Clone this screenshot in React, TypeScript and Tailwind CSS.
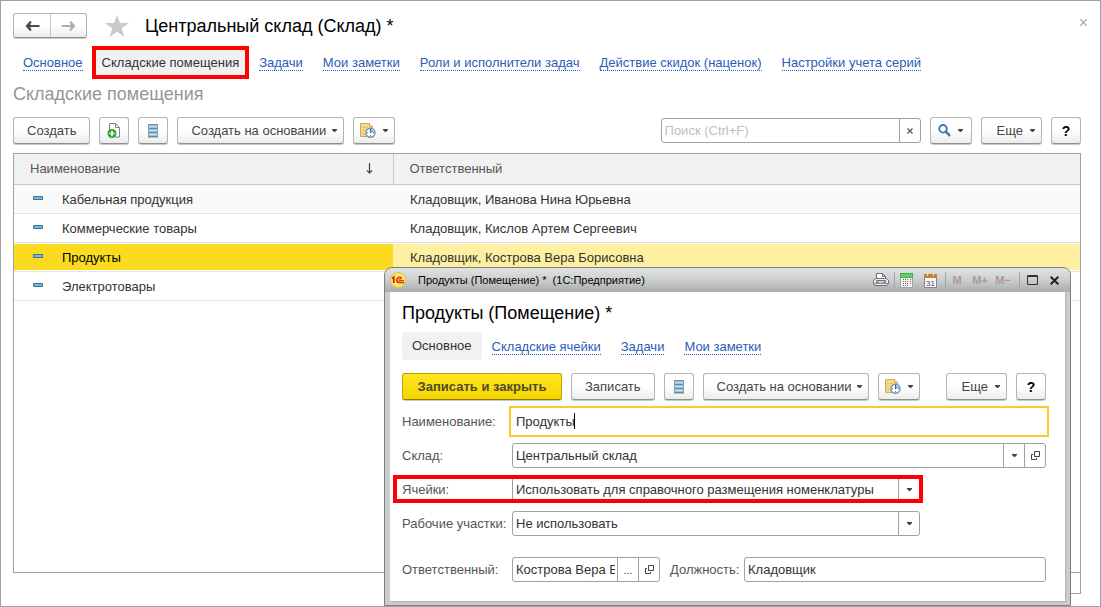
import type { ReactNode } from "react";

const rows = [
  { name: "Кабельная продукция", owner: "Кладовщик, Иванова Нина Юрьевна" },
  { name: "Коммерческие товары", owner: "Кладовщик, Кислов Артем Сергеевич" },
  { name: "Продукты", owner: "Кладовщик, Кострова Вера Борисовна", selected: true },
  { name: "Электротовары", owner: "" },
];

const links = [
  "Задачи",
  "Мои заметки",
  "Роли и исполнители задач",
  "Действие скидок (наценок)",
  "Настройки учета серий",
];

export default function App() {
  return (
    <div
      className="relative flex min-h-screen flex-col overflow-hidden border border-[#a0a0a0] bg-white pr-[19px] pl-3 text-[13px] leading-4 text-[#404040]"
      style={{ fontFamily: '"Liberation Sans", Arial, sans-serif' }}
    >
      <header className="flex h-[45px] items-center pt-1">
        <div className="flex h-[25px] rounded-[3px] border border-[#b4b4b4] border-b-[#8f8f8f] bg-gradient-to-b from-white via-white to-[#ececec] shadow-[0_1px_0_#c8c8c8]">
          <button aria-label="Назад" className="flex w-[37px] items-center justify-center border-r border-[#c8c8c8] text-[#4a4a4a]">
            <ArrowIcon />
          </button>
          <button aria-label="Вперед" className="flex w-[35px] items-center justify-center text-[#b0b0b0]">
            <ArrowIcon flip />
          </button>
        </div>
        <StarIcon />
        <h1 className="ml-4 text-[18px] leading-6 text-black">Центральный склад (Склад) *</h1>
        <button aria-label="Закрыть" className="mb-[6px] ml-auto -mr-[10px] p-1 text-[#a0a0a0]">
          <CrossIcon />
        </button>
      </header>

      <nav className="flex h-[33px] items-center">
        <TabLink>Основное</TabLink>
        <button className="-ml-px h-full border-4 border-[#fe0000] bg-[#f1f1f1] px-[6px] text-[#333]">
          Складские помещения
        </button>
        {links.map((l) => (
          <TabLink key={l}>{l}</TabLink>
        ))}
      </nav>

      <h2 className="mt-[3px] text-[18px] leading-6 text-[#969696]">Складские помещения</h2>

      <div className="mt-[11px] flex items-start gap-[9px]">
        <Button>Создать</Button>
        <Button small label="Создать копированием"><DocPlusIcon /></Button>
        <Button small label="Список"><ListIcon /></Button>
        <Button menu>Создать на основании</Button>
        <Button small menu label="Напоминания"><DocClockIcon /></Button>
        <div className="ml-auto flex h-[25px] w-[260px] overflow-hidden rounded-[3px] border border-[#a0a0a0] mt-px">
          <input
            type="text"
            aria-label="Поиск"
            placeholder="Поиск (Ctrl+F)"
            className="min-w-0 flex-1 px-[3px] outline-none placeholder:text-[#c0c0c0]"
          />
          <button aria-label="Очистить" className="flex w-[21px] items-center justify-center border-l border-[#a0a0a0] text-[#555]">
            <svg width="6" height="6" viewBox="0 0 6 6" stroke="currentColor" strokeWidth="1.3">
              <path d="M.5.5l5 5M5.5.5l-5 5" />
            </svg>
          </button>
        </div>
        <Button small menu label="Найти"><SearchIcon /></Button>
        <Button menu><MoreLabel /></Button>
        <Button small label="Справка"><span className="text-[14px] font-bold text-black">?</span></Button>
      </div>

      <div className="mt-[9px] h-[420px] border border-[#a0a0a0]">
        <table className="w-full table-fixed border-collapse text-left">
          <thead>
            <tr className="h-[30px] border-b border-[#c8c8c8] bg-[#f1f1f1] text-[#555]">
              <th className="w-[379px] border-r border-[#c8c8c8] pr-5 pl-4 font-normal">
                <div className="flex items-center justify-between">
                  Наименование
                  <svg width="8" height="12" viewBox="0 0 8 12" fill="none" stroke="#444">
                    <path d="M4.500 0v10M2 7.500L4.500 10 7 7.500" strokeWidth="1.200" />
                  </svg>
                </div>
              </th>
              <th className="pl-4 font-normal">Ответственный</th>
            </tr>
          </thead>
          <tbody>
            {rows.map((row, i) => (
              <tr
                key={row.name}
                className={`h-[29px] border-b border-[#e4e4e4] ${i === 0 ? "bg-[#fafafa]" : ""}`}
              >
                <td className="p-0">
                  <div className={`flex h-[26px] items-center gap-[19px] pt-[2px] pl-[19px] ${row.selected ? "bg-[#fbdb1f] text-black" : "text-[#333]"}`}>
                    <DashIcon />
                    {row.name}
                  </div>
                </td>
                <td className="p-0">
                  <div className={`flex h-[26px] items-center pt-[2px] pl-[17px] text-[#333] ${row.selected ? "bg-[#fdf0a0]" : ""}`}>
                    {row.owner}
                  </div>
                </td>
              </tr>
            ))}
          </tbody>
        </table>
      </div>
      <div className="-mt-px h-[22px] w-[120px] self-end border border-[#a0a0a0]" />

      <ItemDialog />
    </div>
  );
}

function ItemDialog() {
  return (
    <section
      aria-label="Продукты (Помещение)"
      className="absolute top-[266px] right-[29px] w-[687px] rounded-t-[8px] border border-[#7d7f81] bg-[#cbcccd] px-[5px] pb-[4px]"
    >
      <div className="-mx-[5px] flex h-[24px] items-center rounded-t-[7px] bg-gradient-to-b from-[#e2e3e3] via-[#cccdce] to-[#a9abad] pr-[11px] pl-[5px] text-black">
        <LogoIcon />
        <span className="ml-3 text-[11px] whitespace-pre">Продукты (Помещение) *  (1С:Предприятие)</span>
        <div className="ml-auto flex h-full items-center">
          <button aria-label="Печать"><PrinterIcon /></button>
          <i className="mx-[5px] h-4 w-px bg-[#a4a5a6]" />
          <button aria-label="Калькулятор"><CalculatorIcon /></button>
          <button aria-label="Календарь" className="ml-[11px]"><CalendarIcon /></button>
          <i className="ml-2 h-4 w-px bg-[#a4a5a6]" />
          <button className="w-[22px] text-[11px] font-bold text-[#ad9a94]">M</button>
          <button className="w-6 text-[11px] font-bold text-[#ad9a94]">M+</button>
          <button className="w-[22px] text-[11px] font-bold text-[#ad9a94]">M−</button>
          <i className="ml-[5px] h-4 w-px bg-[#a4a5a6]" />
          <button aria-label="Развернуть" className="ml-[7px]">
            <svg width="11" height="10" viewBox="0 0 11 10" fill="none" stroke="#333" className="block">
              <path d="M.5.5h10v9H.5zM.5 1.500h10" />
            </svg>
          </button>
          <button aria-label="Закрыть окно" className="ml-3">
            <svg width="9" height="9" viewBox="0 0 9 9" stroke="#222" strokeWidth="2" className="block">
              <path d="M.7.7l7.600 7.600M8.300.7L.7 8.300" />
            </svg>
          </button>
        </div>
      </div>

      <div className="bg-white pt-[9px] pr-[19px] pb-[19px] pl-3 shadow-[1px_1px_1px_#b4b4b4]">
        <h2 className="text-[18px] leading-6 text-black">Продукты (Помещение) *</h2>

        <nav className="mt-[7px] flex h-7 items-center">
          <button className="h-full rounded-[4px] bg-[#f1f1f1] px-[10px] text-[#333]">Основное</button>
          <TabLink>Складские ячейки</TabLink>
          <TabLink>Задачи</TabLink>
          <TabLink>Мои заметки</TabLink>
        </nav>

        <div className="mt-[13px] flex gap-[9px]">
          <button className="h-[27px] w-[160px] rounded-[3px] border border-[#bfa200] border-b-[#8f7a00] bg-gradient-to-b from-[#ffe61c] to-[#f5d500] font-bold text-[#4f4a2a] shadow-[0_1px_0_#c8c8c8]">
            Записать и закрыть
          </button>
          <Button>Записать</Button>
          <Button small label="Список"><ListIcon /></Button>
          <Button menu>Создать на основании</Button>
          <Button small menu label="Напоминания"><DocClockIcon /></Button>
          <div className="ml-auto flex gap-[9px]">
            <Button menu><MoreLabel /></Button>
            <Button small label="Справка"><span className="text-[14px] font-bold text-black">?</span></Button>
          </div>
        </div>

        <div className="mt-[9px] flex flex-col gap-[9px] text-[#555]">
          <Row label="Наименование:" id="name">
            <div className="relative flex flex-1">
              <input
                id="name"
                defaultValue="Продукты"
                className="h-[25px] min-w-0 flex-1 px-1 text-[#333] outline-2 outline-offset-1 outline-[#fbcc1f]"
              />
              <i className="absolute top-1 left-[62px] h-4 w-px bg-black" />
            </div>
          </Row>
          <Row label="Склад:" id="store">
            <Field>
              <input id="store" defaultValue="Центральный склад" className="min-w-0 flex-1 pl-[3px] outline-none" />
              <FieldButton label="Выбрать"><Caret /></FieldButton>
              <FieldButton label="Открыть"><OpenIcon /></FieldButton>
            </Field>
          </Row>
          <div className="relative">
            <Row label="Ячейки:" id="cells">
              <SelectField id="cells" value="Использовать для справочного размещения номенклатуры" />
            </Row>
            <div className="pointer-events-none absolute -top-[2px] -left-[9px] h-[28px] w-[530px] border-4 border-[#fe0000]" />
          </div>
          <Row label="Рабочие участки:" id="areas">
            <SelectField id="areas" value="Не использовать" />
          </Row>
          <div className="mt-3 flex">
            <Row label="Ответственный:" id="owner">
              <div className="flex w-[148px]">
                <Field>
                  <input id="owner" defaultValue="Кострова Вера Борисовна" className="mr-[2px] min-w-0 flex-1 pl-[3px] outline-none" />
                  <FieldButton label="Подобрать"><span className="text-[11px]">...</span></FieldButton>
                  <FieldButton label="Открыть"><OpenIcon /></FieldButton>
                </Field>
              </div>
            </Row>
            <label htmlFor="post" className="ml-[10px] w-[74px] self-center">Должность:</label>
            <Field>
              <input id="post" defaultValue="Кладовщик" className="min-w-0 flex-1 pl-[3px] outline-none" />
            </Field>
          </div>
        </div>
      </div>
    </section>
  );
}

function TabLink({ children }: { children: ReactNode }) {
  return (
    <a href="#" className="mx-[10px] pt-[2px] text-[#2a5db8]">
      <span className="block border-b border-dotted border-[#2a5db8] leading-[14px]">{children}</span>
    </a>
  );
}

function MoreLabel() {
  return <span className="pr-px pl-[2px]">Еще</span>;
}

function Button({
  children,
  small,
  menu,
  label,
}: {
  children: ReactNode;
  small?: boolean;
  menu?: boolean;
  label?: string;
}) {
  return (
    <button
      aria-label={label}
      className={`flex h-[27px] shrink-0 items-center justify-center rounded-[3px] border border-[#b4b4b4] border-b-[#8f8f8f] bg-gradient-to-b from-white via-white to-[#ececec] text-[#444] shadow-[0_1px_0_#c8c8c8] ${
        small ? (menu ? "w-[42px] gap-[7px]" : "w-[30px]") : menu ? "gap-[6px] pr-[6px] pl-[13px]" : "px-[13px]"
      }`}
    >
      {children}
      {menu && <Caret />}
    </button>
  );
}

function Row({ label, id, children }: { label: string; id: string; children: ReactNode }) {
  return (
    <div className="flex items-center">
      <label htmlFor={id} className="w-[110px] shrink-0 whitespace-nowrap">{label}</label>
      {children}
    </div>
  );
}

function Field({ children }: { children: ReactNode }) {
  return (
    <div className="flex h-[25px] min-w-0 flex-1 overflow-hidden rounded-[3px] border border-[#a0a0a0] text-[#333]">
      {children}
    </div>
  );
}

function FieldButton({ label, children }: { label: string; children: ReactNode }) {
  return (
    <button aria-label={label} className="flex w-[21px] shrink-0 items-center justify-center border-l border-[#a0a0a0] text-[#444]">
      {children}
    </button>
  );
}

function SelectField({ id, value }: { id: string; value: string }) {
  return (
    <div className="relative flex w-[408px]">
      <select id={id} className="h-[25px] w-full appearance-none rounded-[3px] border border-[#a0a0a0] bg-white pl-[3px] text-[#333]">
        <option>{value}</option>
      </select>
      <span className="pointer-events-none absolute inset-y-px right-px flex w-[21px] items-center justify-center border-l border-[#a0a0a0] text-[#444]">
        <Caret />
      </span>
    </div>
  );
}

/* icons */

function Caret() {
  return (
    <svg width="5" height="3" viewBox="0 0 5 3" fill="#444" className="shrink-0">
      <path d="M0 0h5v1L3 3H2L0 1z" />
    </svg>
  );
}

function ArrowIcon({ flip }: { flip?: boolean }) {
  return (
    <svg width="15" height="12" viewBox="0 0 15 12" fill="none" stroke="currentColor" className={flip ? "-scale-x-100" : ""}>
      <path d="M14.500 6H2" strokeWidth="2" />
      <path d="M6 1.500L1.800 6 6 10.500" strokeWidth="2" />
      <path d="M5.500 3v6L2 6z" fill="currentColor" stroke="none" />
    </svg>
  );
}

function StarIcon() {
  return (
    <svg width="24" height="22" viewBox="0 0 24 22" fill="#c8cacb" className="ml-[18px]">
      <path d="M12 0l2.900 8H24l-7.300 5.200L19.400 22 12 16.700 4.600 22l2.700-8.800L0 8h9.100z" />
    </svg>
  );
}

function CrossIcon() {
  return (
    <svg width="7" height="7" viewBox="0 0 7 7" stroke="currentColor" strokeWidth="1.200" className="block">
      <path d="M.3.3l6.400 6.400M6.700.3L.3 6.700" />
    </svg>
  );
}

function DashIcon() {
  return (
    <svg width="10" height="4" viewBox="0 0 10 4" className="mb-[3px] shrink-0">
      <path d="M.5.5h9v3h-9z" fill="#7fb4dc" stroke="#456f8c" />
    </svg>
  );
}

function DocPlusIcon() {
  return (
    <svg width="14" height="15" viewBox="0 0 14 15" fill="none">
      <path d="M2.500 7V.5h6l4 4v9.500H8" fill="#fff" stroke="#6f8793" />
      <path d="M8.500.5v4h4" stroke="#6f8793" />
      <circle cx="5" cy="10.500" r="4.500" fill="#3d9c3a" />
      <path d="M5 7.800v5.400M2.300 10.500h5.400" stroke="#e9ffe4" strokeWidth="1.700" />
    </svg>
  );
}

function ListIcon() {
  return (
    <svg width="10" height="14" viewBox="0 0 10 14">
      <path fill="#a9c5da" d="M0 0h10v14H0z" />
      <path d="M0 .5h10M0 4.500h10M0 8.500h10M0 12.500h10" stroke="#6288a5" />
      <path d="M1 2.500h8M1 6.500h8M1 10.500h8" stroke="#c3d8e6" />
      <path d="M.5 0v14M9.500 0v14" stroke="#7d9fb8" />
    </svg>
  );
}

function DocClockIcon() {
  return (
    <svg width="16" height="15" viewBox="0 0 16 15" fill="none">
      <path d="M.5.500h9l3 3v10H.5z" fill="#f4d98b" stroke="#d0aa55" />
      <path d="M9.500.5v3h3" fill="#fff0c0" stroke="#d0aa55" />
      <path d="M2 4.500h2M5 4.500h3M2 7.500h2M5 7.500h2M2 10.500h3" stroke="#dfbd6c" />
      <circle cx="10.500" cy="9.700" r="4.500" fill="#fff" stroke="#6b96b8" strokeWidth="1.400" />
      <path d="M10.500 9.700V6.300a3.400 3.400 0 0 1 3.400 3.400z" fill="#8fb8dc" />
      <path d="M10.500 6v4" stroke="#36597c" />
      <path d="M7 9.700h1M10.500 12.200v1M13 9.700h1" stroke="#c8553d" />
    </svg>
  );
}

function SearchIcon() {
  return (
    <svg width="13" height="13" viewBox="0 0 13 13" fill="none" stroke="#3f74ae">
      <circle cx="5" cy="4.800" r="3.800" strokeWidth="1.800" />
      <path d="M7.800 7.600l4.200 4.200" strokeWidth="2.400" />
    </svg>
  );
}

function OpenIcon() {
  return (
    <svg width="9" height="9" viewBox="0 0 9 9" fill="none" stroke="#444">
      <path d="M3.500.5h5v5h-5z" />
      <path d="M2 3.500H.5v5h5V7" />
    </svg>
  );
}

function LogoIcon() {
  return (
    <svg width="16" height="16" viewBox="0 0 16 16" fill="none">
      <circle cx="8" cy="8" r="7.500" fill="#fde860" stroke="#e0bc58" />
      <path d="M2 6.500l1.800-1.200V11" stroke="#d8261c" strokeWidth="1.800" />
      <path d="M11.800 6.300C10.300 4.700 6.700 5.200 6.700 8c0 1.700 1.100 2.500 2.700 2.500H14" stroke="#d8261c" strokeWidth="1.500" />
      <path d="M11.300 7.600c-1-.8-2.500-.6-2.500.3 0 .6.400.7 1.100.7H14" stroke="#d8261c" />
    </svg>
  );
}

function PrinterIcon() {
  return (
    <svg width="16" height="14" viewBox="0 0 16 14" fill="none" stroke="#6c7075" className="block">
      <path d="M3.500 6V.5h6l3 3V6" fill="#fff" />
      <path d="M9.500.5v3h3" />
      <path d="M2.500 5.500h11l2 2v3l-1.500 2H2L.5 10.500v-3z" fill="#eceded" />
      <path d="M3.500 7.500h9v2h-2l-1 1h-3l-1-1h-2z" fill="#c7d0da" />
      <path d="M1 10.500h14" stroke="#8c9094" />
    </svg>
  );
}

function CalculatorIcon() {
  return (
    <svg width="13" height="15" viewBox="0 0 13 15" className="block">
      <path d="M.5.5h12v14H.5z" fill="#f5f5f5" stroke="#a0a2a4" />
      <path d="M0 0h13v5H0z" fill="#45b04b" />
      <path d="M1 1h11v3H1z" fill="#63cc67" />
      <path d="M3 6.500h6M3 8.500h6M3 10.500h6M3 12.500h6" stroke="#666" strokeDasharray="1 1" />
      <path d="M10.500 6v5" stroke="#b5453a" strokeDasharray="1 1" />
    </svg>
  );
}

function CalendarIcon() {
  return (
    <svg width="13" height="15" viewBox="0 0 13 15" className="block">
      <path d="M.5 1.500h12v13H.5z" fill="#fbfbfb" stroke="#7d8894" />
      <path d="M0 1h13v4H0z" fill="#c5803a" />
      <path d="M3.500 0v3M9.500 0v3" stroke="#f4e3cf" />
      <text x="6.500" y="12.500" fontSize="8" textAnchor="middle" fill="#444">31</text>
    </svg>
  );
}
